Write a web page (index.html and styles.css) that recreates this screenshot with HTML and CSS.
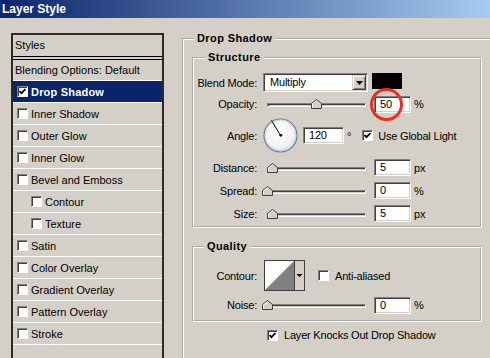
FILE: index.html
```html
<!DOCTYPE html>
<html lang="en">
<head>
  <meta charset="UTF-8">
  <meta name="viewport" content="width=device-width, initial-scale=1.0">
  <title>Layer Style</title>
  <link rel="stylesheet" href="styles.css">
</head>
<body>
  <div class="titlebar">Layer Style</div>

  <div class="dialog">
    <!-- left list of effects -->
    <div class="styles-panel">
      <div class="styles-head">Styles</div>
      <ul class="style-list">
        <li class="item plain">Blending Options: Default</li>
        <li class="item selected"><span class="check"><svg viewBox="0 0 9 9"><path d="M1.5 4.2l2 2 4-4.2"/></svg></span>Drop Shadow</li>
        <li class="item"><span class="check"></span>Inner Shadow</li>
        <li class="item"><span class="check"></span>Outer Glow</li>
        <li class="item"><span class="check"></span>Inner Glow</li>
        <li class="item"><span class="check"></span>Bevel and Emboss</li>
        <li class="item sub"><span class="check"></span>Contour</li>
        <li class="item sub"><span class="check"></span>Texture</li>
        <li class="item"><span class="check"></span>Satin</li>
        <li class="item"><span class="check"></span>Color Overlay</li>
        <li class="item"><span class="check"></span>Gradient Overlay</li>
        <li class="item"><span class="check"></span>Pattern Overlay</li>
        <li class="item"><span class="check"></span>Stroke</li>
        <li class="item empty"></li>
      </ul>
    </div>

    <!-- drop shadow settings -->
    <fieldset class="group outer">
      <legend>Drop Shadow</legend>

      <fieldset class="group sub-group structure">
        <legend>Structure</legend>

        <div class="row r-blend">
          <span class="label">Blend Mode:</span>
          <div class="select">
            <span class="value">Multiply</span>
            <span class="btn"><svg width="7" height="4" viewBox="0 0 7 4"><path d="M0 0h7L3.5 4z"/></svg></span>
          </div>
          <span class="swatch"></span>
        </div>

        <div class="row r-opacity">
          <span class="label">Opacity:</span>
          <div class="slider">
            <div class="track"></div>
            <svg class="thumb" style="left:48px" viewBox="0 0 11 10"><path class="thumb-body" d="M0.5 9.5V4.5L5.5 0.5L10.5 4.5V9.5Z"/><path class="thumb-hi" d="M1.5 8.5V5L5.5 1.8"/></svg>
          </div>
          <div class="ringed">
            <span class="field">50</span>
            <span class="ring"></span>
          </div>
          <span class="unit">%</span>
        </div>

        <div class="row r-angle">
          <span class="label">Angle:</span>
          <svg class="dial" width="35" height="35" viewBox="0 0 35 35">
            <defs>
              <radialGradient id="dialFill" cx="45%" cy="40%" r="60%">
                <stop offset="0" stop-color="#ffffff"/>
                <stop offset="0.75" stop-color="#f2f2f2"/>
                <stop offset="1" stop-color="#d8dbe3"/>
              </radialGradient>
            </defs>
            <circle cx="17.5" cy="17.5" r="16.5" fill="url(#dialFill)" stroke="#6d7a99" stroke-width="1.2"/>
            <circle cx="17.5" cy="17.5" r="15.3" fill="none" stroke="#c3c9d8" stroke-width="0.8"/>
            <line x1="17.5" y1="17.5" x2="8.5" y2="2.4" stroke="#000" stroke-width="1"/>
            <circle cx="17.8" cy="17.3" r="1.4" fill="#000"/>
          </svg>
          <span class="field angle">120</span>
          <span class="deg">°</span>
          <span class="opt global"><span class="check"><svg viewBox="0 0 9 9"><path d="M1.5 4.2l2 2 4-4.2"/></svg></span>Use Global Light</span>
        </div>

        <div class="row r-slide">
          <span class="label">Distance:</span>
          <div class="slider">
            <div class="track"></div>
            <svg class="thumb" style="left:4px" viewBox="0 0 11 10"><path class="thumb-body" d="M0.5 9.5V4.5L5.5 0.5L10.5 4.5V9.5Z"/><path class="thumb-hi" d="M1.5 8.5V5L5.5 1.8"/></svg>
          </div>
          <span class="field">5</span>
          <span class="unit">px</span>
        </div>

        <div class="row r-slide">
          <span class="label">Spread:</span>
          <div class="slider">
            <div class="track"></div>
            <svg class="thumb" style="left:-1px" viewBox="0 0 11 10"><path class="thumb-body" d="M0.5 9.5V4.5L5.5 0.5L10.5 4.5V9.5Z"/><path class="thumb-hi" d="M1.5 8.5V5L5.5 1.8"/></svg>
          </div>
          <span class="field">0</span>
          <span class="unit">%</span>
        </div>

        <div class="row r-slide">
          <span class="label">Size:</span>
          <div class="slider">
            <div class="track"></div>
            <svg class="thumb" style="left:4px" viewBox="0 0 11 10"><path class="thumb-body" d="M0.5 9.5V4.5L5.5 0.5L10.5 4.5V9.5Z"/><path class="thumb-hi" d="M1.5 8.5V5L5.5 1.8"/></svg>
          </div>
          <span class="field">5</span>
          <span class="unit">px</span>
        </div>
      </fieldset>

      <fieldset class="group sub-group quality">
        <legend>Quality</legend>

        <div class="row r-contour">
          <span class="label">Contour:</span>
          <svg class="contour" width="41" height="31" viewBox="0 0 41 31">
            <rect x="0.5" y="0.5" width="40" height="30" fill="#d4d0c8" stroke="#404040"/>
            <rect x="1" y="1" width="29" height="29" fill="#fff"/>
            <path d="M1 30L30 1V30Z" fill="#808080"/>
            <line x1="30.5" y1="1" x2="30.5" y2="30" stroke="#404040"/>
            <path d="M32.5 14h6l-3 3z" fill="#000"/>
          </svg>
          <span class="opt aa"><span class="check"></span>Anti-aliased</span>
        </div>

        <div class="row r-noise">
          <span class="label">Noise:</span>
          <div class="slider">
            <div class="track"></div>
            <svg class="thumb" style="left:-1px" viewBox="0 0 11 10"><path class="thumb-body" d="M0.5 9.5V4.5L5.5 0.5L10.5 4.5V9.5Z"/><path class="thumb-hi" d="M1.5 8.5V5L5.5 1.8"/></svg>
          </div>
          <span class="field">0</span>
          <span class="unit">%</span>
        </div>
      </fieldset>

      <div class="row knock">
        <span class="opt"><span class="check"><svg viewBox="0 0 9 9"><path d="M1.5 4.2l2 2 4-4.2"/></svg></span>Layer Knocks Out Drop Shadow</span>
      </div>
    </fieldset>
  </div>
</body>
</html>
```

FILE: styles.css
```css
* {
  box-sizing: border-box;
}

html,
body {
  margin: 0;
}

body {
  width: 490px;
  height: 358px;
  overflow: hidden;
  background: #d4d0c8;
  font: 11px "Liberation Sans", Arial, sans-serif;
  color: #000;
}

.titlebar {
  height: 18px;
  line-height: 18px;
  padding-left: 2px;
  background: linear-gradient(to right, #0a246a, #a6caf0);
  color: #fff;
  font-size: 12px;
  font-weight: bold;
}

.dialog {
  display: flex;
  align-items: flex-start;
  padding: 14px 0 0 11px;
}

/* ---- left list ---- */
.styles-panel {
  flex-shrink: 0;
  width: 153px;
  height: 340px;
  margin-top: 1px;
  border: 2px solid #2a2a2a;
}

.styles-head {
  height: 22px;
  line-height: 21px;
  padding-left: 2px;
  border-bottom: 1px solid #000;
  margin-bottom: 2px;
}

.style-list {
  list-style: none;
  margin: 0;
  padding: 0;
  border-top: 1px solid #000;
}

.item {
  display: flex;
  align-items: center;
  height: 22px;
  padding-left: 4px;
  border-bottom: 1px solid #fff;
}

.item.plain {
  height: 21px;
  padding-left: 2px;
}

.item.sub {
  padding-left: 18px;
}

.item.selected {
  background: #0a246a;
  color: #fff;
  font-weight: bold;
  letter-spacing: 0.2px;
}

.item.empty {
  border-bottom: none;
}

.check {
  flex-shrink: 0;
  width: 11px;
  height: 11px;
  margin-right: 3px;
  background: #fff;
  border: 1px solid;
  border-color: #808080 #fff #fff #808080;
  box-shadow: inset 1px 1px #404040;
}

.check svg {
  display: block;
  width: 9px;
  height: 9px;
  fill: none;
  stroke: #000;
  stroke-width: 1.8;
}

/* ---- group boxes ---- */
.group {
  margin: 0;
  min-width: 0;
  border: 2px groove #fff;
}

.group legend {
  padding: 0 3px;
  line-height: 13px;
  font-weight: bold;
  letter-spacing: 0.4px;
}

.outer {
  flex-shrink: 0;
  width: 320px;
  height: 340px;
  margin-left: 18px;
  padding: 6px 0 0 8px;
  letter-spacing: -0.2px;
}

.outer > legend {
  margin-left: 2px;
}

.sub-group {
  width: 290px;
}

.structure {
  padding: 8px 0 1px 0;
}

.structure legend {
  margin-left: 11px;
}

.quality {
  margin-top: 12px;
  padding: 6px 0 4px 0;
}

.quality legend {
  margin-left: 10px;
}

/* ---- rows ---- */
.row {
  display: flex;
  align-items: center;
}

.label {
  flex-shrink: 0;
  width: 63px;
  margin-right: 6px;
  text-align: right;
}

.r-blend {
  height: 21px;
}

.r-opacity {
  height: 22px;
}

.r-angle {
  height: 41px;
}

.r-slide {
  height: 23px;
}

.r-contour {
  height: 33px;
}

.r-noise {
  height: 22px;
  margin-top: 2px;
}

.knock {
  height: 22px;
  margin-top: 2px;
  padding-left: 75px;
}

/* ---- controls ---- */
.select {
  display: flex;
  width: 105px;
  height: 19px;
  padding: 1px;
  background: #fff;
  border: 1px solid;
  border-color: #808080 #fff #fff #808080;
  box-shadow: inset 1px 1px #404040, inset -1px -1px #d4d0c8;
}

.select .value {
  flex: 1;
  padding-left: 5px;
  line-height: 15px;
}

.select .btn {
  display: flex;
  align-items: center;
  justify-content: center;
  width: 14px;
  background: #d4d0c8;
  border: 1px solid;
  border-color: #d4d0c8 #404040 #404040 #d4d0c8;
  box-shadow: inset 1px 1px #fff, inset -1px -1px #808080;
}

.swatch {
  width: 30px;
  height: 16px;
  margin: 0 0 4px 4px;
  background: #000;
}

.field {
  display: block;
  width: 37px;
  height: 17px;
  margin-left: 8px;
  padding-left: 5px;
  line-height: 15px;
  background: #fff;
  border: 1px solid;
  border-color: #808080 #fff #fff #808080;
  box-shadow: inset 1px 1px #404040, inset -1px -1px #d4d0c8;
}

.ringed {
  position: relative;
  margin-left: 8px;
}

.ringed .field {
  margin-left: 0;
}

.ring {
  position: absolute;
  left: -4px;
  top: -8px;
  width: 33px;
  height: 33px;
  border: 3.5px solid #e8311d;
  border-radius: 50%;
}

.unit {
  margin-left: 3px;
}

.slider {
  position: relative;
  flex-shrink: 0;
  width: 103px;
  height: 12px;
}

.track {
  height: 4px;
  margin: 5px 0 0 4px;
  background: #fff;
  border: 1px solid;
  border-color: #808080 #fff #fff #808080;
  box-shadow: inset 1px 1px #404040, inset -1px -1px #d4d0c8;
}

.thumb {
  position: absolute;
  top: 1px;
  width: 11px;
  height: 10px;
}

.thumb-body {
  fill: #d4d0c8;
  stroke: #404040;
}

.thumb-hi {
  fill: none;
  stroke: #fff;
}

.dial {
  flex-shrink: 0;
}

.field.angle {
  width: 41px;
  margin-left: 5px;
}

.deg {
  margin-left: 3px;
}

.opt {
  display: flex;
  align-items: center;
}

.opt .check {
  margin-right: 6px;
}

.global {
  margin-left: 11px;
}

.global .check {
  margin-right: 5px;
}

.contour {
  flex-shrink: 0;
  margin-left: 1px;
}

.aa {
  margin-left: 13px;
}
```
